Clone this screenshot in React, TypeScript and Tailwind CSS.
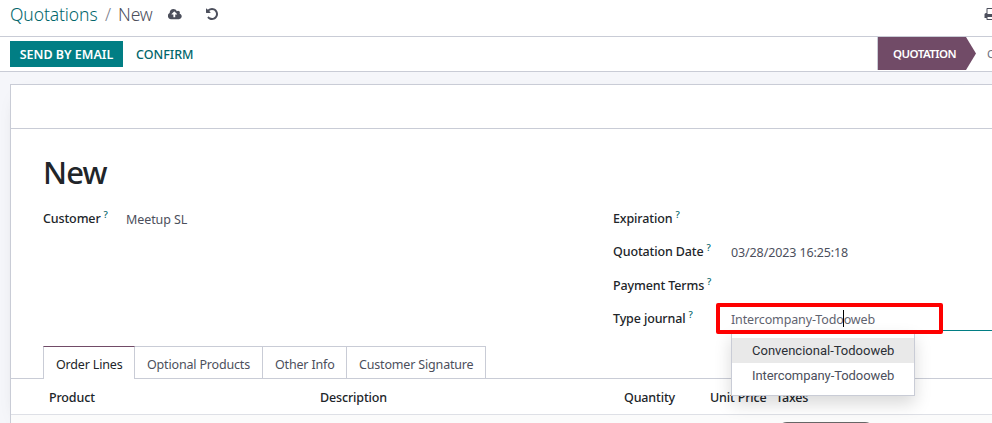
import type { ReactNode } from "react";

function Icon({ d, viewBox, className }: { d: string; viewBox: string; className: string }) {
  return (
    <svg viewBox={viewBox} className={className} fill="currentColor" aria-hidden="true">
      <path d={d} />
    </svg>
  );
}

const CLOUD =
  "M1216 864q0-14-9-23l-352-352q-9-9-23-9t-23 9l-351 351q-10 12-10 24 0 14 9 23t23 9h224v352q0 13 9.5 22.5t22.5 9.5h192q13 0 22.5-9.5t9.5-22.5v-352h224q13 0 22.5-9.5t9.5-22.5zm640 288q0 159-112.5 271.5t-271.5 112.5h-1088q-185 0-316.5-131.5t-131.5-316.5q0-130 70-240t188-165q-2-30-2-43 0-212 150-362t362-150q156 0 285.5 87t188.5 231q71-62 166-62 106 0 181 75t75 181q0 76-41 138 130 31 213.5 135.5t83.5 238.5z";
const UNDO =
  "M1664 896q0 156-61 298t-164 245-245 164-298 61q-172 0-327-72.5t-264-204.5q-7-10-6.5-22.5t8.5-20.5l137-138q10-9 25-9 16 2 23 12 73 95 179 147t225 52q104 0 198.5-40.5t163.5-109.5 109.5-163.5 40.5-198.5-40.5-198.5-109.5-163.5-163.5-109.5-198.5-40.5q-98 0-188 35.5t-160 101.5l137 138q31 30 14 69-17 40-59 40h-448q-26 0-45-19t-19-45v-448q0-42 40-59 39-17 69 14l130 129q107-101 244.5-156.5t284.5-55.5q156 0 298 61t245 164 164 245 61 298z";
const PRINT =
  "M448 1536h896v-256h-896v256zm0-640h896v-384h-160q-40 0-68-28t-28-68v-160h-640v640zm1152 64q0-26-19-45t-45-19-45 19-19 45 19 45 45 19 45-19 19-45zm128 0v416q0 13-9.5 22.5t-22.5 9.5h-224v160q0 40-28 68t-68 28h-960q-40 0-68-28t-28-68v-160h-224q-13 0-22.5-9.5t-9.5-22.5v-416q0-79 56.5-135.5t135.5-56.5h64v-544q0-40 28-68t68-28h672q40 0 88 20t76 48l152 152q28 28 48 76t20 88v256h64q79 0 135.5 56.5t56.5 135.5z";

function Label({ children, className = "" }: { children: ReactNode; className?: string }) {
  return (
    <div
      className={`flex shrink-0 gap-[3px] text-[12.5px] leading-5 font-medium tracking-[-0.13px] text-[#212529] ${className}`}
    >
      <span>{children}</span>
      <span className="-mt-1 text-[9.5px] font-medium text-[#01666b]">?</span>
    </div>
  );
}

function ControlPanel() {
  return (
    <header className="flex h-[37px] shrink-0 border-b border-[#c9ccd6] pl-[10px] text-[#4c4f5c]">
      <div className="flex h-7 w-[158px] shrink-0 gap-[6px] text-[17.5px] leading-7 font-light tracking-[-0.1px]">
        <span className="w-[89px] text-[#01666b]">Quotations</span>
        <span className="w-[7px] text-[#7c7f8c]">/</span>
        <span>New</span>
      </div>
      <Icon d={CLOUD} viewBox="0 0 1856 1792" className="mt-2 h-[13px] w-[14px] shrink-0" />
      <Icon d={UNDO} viewBox="0 0 1792 1792" className="mt-[7px] ml-[22.5px] h-[14px] w-[14px] shrink-0" />
      <Icon d={PRINT} viewBox="0 0 1792 1792" className="mt-[7px] ml-[765px] h-[14px] w-[14px] shrink-0" />
    </header>
  );
}

function StatusBar() {
  return (
    <div className="flex h-[35px] shrink-0 border-b border-[#c9ccd6] pl-[10px]">
      <button className="mt-1 h-[26px] w-[113px] shrink-0 bg-[#017e84] pt-[2px] text-[12.5px] font-semibold text-white">
        SEND BY EMAIL
      </button>
      <button className="mt-1 ml-[13px] h-[26px] shrink-0 pt-[2px] text-[12.5px] font-medium text-[#01666b]">
        CONFIRM
      </button>
      <div className="ml-auto flex h-[33px] w-[115px] shrink-0 overflow-hidden border-l border-[#c9ccd6]">
        <div className="h-[33px] w-[98px] shrink-0 bg-[#714b67] pl-[15px] text-[11.5px] leading-[33px] font-semibold tracking-[-0.55px] text-white [clip-path:polygon(0_0,88px_0,98px_50%,88px_100%,0_100%)]">
          QUOTATION
        </div>
        <span className="ml-[11px] text-[11.5px] leading-[33px] text-[#6c707c]">QUOTATION SENT</span>
      </div>
    </div>
  );
}

function JournalField() {
  return (
    <div className="relative -mt-[2px] h-[29px] grow border-b border-[#017e84]">
      <span className="block pt-[8px] text-[12.5px] leading-5 tracking-[-0.13px] text-[#5f636f]">
        Intercompany-Todooweb
      </span>
      <span className="absolute top-[8px] left-[112px] h-[17px] w-px bg-black" />
      <ul className="absolute top-[29px] left-0 z-10 h-[65px] w-[184px] border border-[#c9ccd6] bg-white pt-[6px] font-[Roboto,sans-serif] text-[13px] leading-[25px] text-[#4c4f5c] shadow-[0_8px_16px_rgba(0,0,0,0.15)]">
        <li className="h-[25px] bg-[#e9e9e9] pl-5 text-[#2b2f36]">Convencional-Todooweb</li>
        <li className="h-[25px] pl-5 tracking-[-0.07px]">Intercompany-Todooweb</li>
      </ul>
      <span className="absolute top-[1px] left-[-15.5px] z-20 h-[31px] w-[227px] rounded-[2px] border-[4px] border-[#fe0000]" />
    </div>
  );
}

function Tabs() {
  return (
    <nav className="flex h-[33px] shrink-0 text-[12.5px] leading-[35px] tracking-[-0.17px] text-[#4c4f5c]">
      <span className="w-8 shrink-0 border-b border-[#c9ccd6]" />
      <span className="w-[92px] shrink-0 border-x border-t border-x-[#c9ccd6] border-t-[#714b67] pl-3 text-[#212529]">
        Order Lines
      </span>
      <span className="w-[128px] shrink-0 border-y border-r border-[#c9ccd6] pl-3">Optional Products</span>
      <span className="w-[84px] shrink-0 border-y border-r border-[#c9ccd6] pl-3">Other Info</span>
      <span className="w-[139px] shrink-0 border-y border-r border-[#c9ccd6] pl-3">Customer Signature</span>
      <span className="grow border-b border-[#c9ccd6]" />
    </nav>
  );
}

export default function App() {
  return (
    <div className="flex h-[423px] w-[992px] flex-col overflow-hidden bg-white font-['Noto_Sans',sans-serif] whitespace-nowrap">
      <ControlPanel />
      <StatusBar />
      <main className="flex grow bg-[#f5f6fa] pt-3 pl-[10px]">
        <section className="flex h-[339px] w-[982px] shrink-0 flex-col border-t border-l border-[#c9ccd6] bg-white shadow-[0_5px_20px_-15px_rgba(0,0,0,0.4)]">
          <div className="h-[44px] shrink-0 border-b border-[#c9ccd6]" />
          <h1 className="mt-[23px] h-10 shrink-0 pl-8 text-[31px] leading-10 font-medium tracking-[-0.9px] text-[#212529]">
            New
          </h1>
          <div className="mt-[17px] flex h-[137px] shrink-0 pl-8">
            <div className="flex w-[570px] shrink-0">
              <Label className="w-[83px]">Customer</Label>
              <span className="mt-px text-[12.5px] leading-5 tracking-[-0.1px] text-[#4c4f5c]">Meetup SL</span>
            </div>
            <div className="flex grow flex-col">
              <div className="flex h-[33px] shrink-0">
                <Label>Expiration</Label>
              </div>
              <div className="flex h-[34px] shrink-0">
                <Label className="w-[118px]">Quotation Date</Label>
                <span className="mt-px text-[12.5px] leading-5 tracking-[-0.12px] text-[#4c4f5c]">
                  03/28/2023 16:25:18
                </span>
              </div>
              <div className="flex h-[28px] shrink-0">
                <Label>Payment Terms</Label>
              </div>
              <div className="flex h-[33px] shrink-0">
                <Label className="mt-[5px] w-[118px]">Type journal</Label>
                <JournalField />
              </div>
            </div>
          </div>
          <Tabs />
          <div className="flex h-9 shrink-0 border-b border-[#dee0e6] pl-[38px] text-[12.5px] leading-[38px] font-medium tracking-[-0.15px] text-[#212529]">
            <span className="w-[271px] shrink-0">Product</span>
            <span className="w-[304px] shrink-0">Description</span>
            <span className="w-[86px] shrink-0">Quantity</span>
            <span className="w-[66px] shrink-0">Unit Price</span>
            <span>Taxes</span>
          </div>
          <div className="h-2 shrink-0 overflow-hidden bg-[#fbfbfb] pt-[7px] pl-[766px]">
            <div className="h-5 w-[98px] rounded-[10px] bg-[#666]" />
          </div>
        </section>
      </main>
    </div>
  );
}
